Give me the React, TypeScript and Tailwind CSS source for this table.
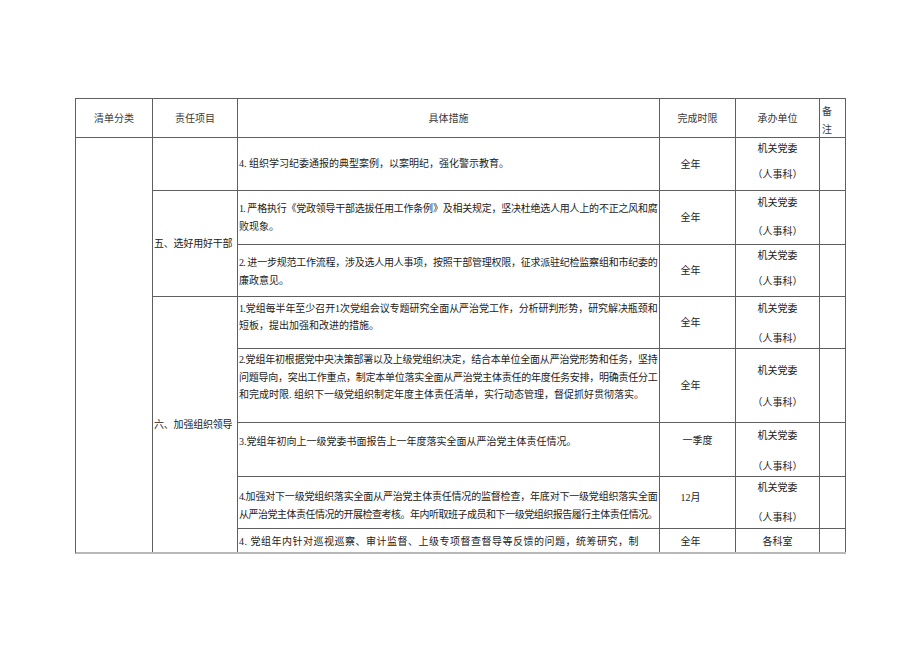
import React from 'react';

// 党风廉政建设责任清单（节选）— table reproduced with a CSS grid

type Row = {
  lines: string[];
  justifyAll?: boolean;
  measureCls: string;
  deadline: string;
  deadlineCls: string;
  unit: 'party' | 'office';
  unitCls: string;
};

const rows: Row[] = [
  {
    lines: ['4. 组织学习纪委通报的典型案例，以案明纪，强化警示教育。'],
    measureCls: 'row-start-2',
    deadline: '全年',
    deadlineCls: 'row-start-2 pr-[14px]',
    unit: 'party',
    unitCls: 'row-start-2 pt-[4px] pb-[8px]',
  },
  {
    lines: [
      '1. 严格执行《党政领导干部选拔任用工作条例》及相关规定，坚决杜绝选人用人上的不正之风和腐',
      '败现象。',
    ],
    measureCls: 'row-start-3',
    deadline: '全年',
    deadlineCls: 'row-start-3 pr-[14px]',
    unit: 'party',
    unitCls: 'row-start-3 pt-[5px] pb-[5px]',
  },
  {
    lines: [
      '2. 进一步规范工作流程，涉及选人用人事项，按照干部管理权限，征求派驻纪检监察组和市纪委的',
      '廉政意见。',
    ],
    measureCls: 'row-start-4 pt-[2px]',
    deadline: '全年',
    deadlineCls: 'row-start-4 pr-[14px]',
    unit: 'party',
    unitCls: 'row-start-4 pt-[4px] pb-[7px]',
  },
  {
    lines: [
      '1.党组每半年至少召开1次党组会议专题研究全面从严治党工作，分析研判形势，研究解决瓶颈和',
      '短板，提出加强和改进的措施。',
    ],
    measureCls: 'row-start-5 pb-[11px]',
    deadline: '全年',
    deadlineCls: 'row-start-5 pr-[14px]',
    unit: 'party',
    unitCls: 'row-start-5 pt-[5px] pb-[2px]',
  },
  {
    lines: [
      '2.党组年初根据党中央决策部署以及上级党组织决定，结合本单位全面从严治党形势和任务，坚持',
      '问题导向，突出工作重点，制定本单位落实全面从严治党主体责任的年度任务安排，明确责任分工',
      '和完成时限. 组织下一级党组织制定年度主体责任清单，实行动态管理，督促抓好贯彻落实。',
    ],
    measureCls: 'row-start-6 pb-[16px]',
    deadline: '全年',
    deadlineCls: 'row-start-6 pr-[14px]',
    unit: 'party',
    unitCls: 'row-start-6 pt-[15px] pb-[12px]',
  },
  {
    lines: ['3.党组年初向上一级党委书面报告上一年度落实全面从严治党主体责任情况。'],
    measureCls: 'row-start-7 pb-[16px]',
    deadline: '一季度',
    deadlineCls: 'row-start-7 pb-[18px]',
    unit: 'party',
    unitCls: 'row-start-7 pt-[6px] pb-[2px]',
  },
  {
    lines: [
      '4.加强对下一级党组织落实全面从严治党主体责任情况的监督检查，年底对下一级党组织落实全面',
      '从严治党主体责任情况的开展检查考核。年内听取班子成员和下一级党组织报告履行主体责任情况。',
    ],
    justifyAll: true,
    measureCls: 'row-start-8 pt-[6px]',
    deadline: '12月',
    deadlineCls: 'row-start-8 pr-[14px] pb-[10px]',
    unit: 'party',
    unitCls: 'row-start-8 pt-[4px] pb-[3px]',
  },
  {
    lines: ['4. 党组年内针对巡视巡察、审计监督、上级专项督查督导等反馈的问题，统筹研究，制'],
    measureCls: 'row-start-9 pt-[2px] tracking-[0.5px]',
    deadline: '全年',
    deadlineCls: 'row-start-9 pr-[14px] pt-[2px]',
    unit: 'office',
    unitCls: 'row-start-9 pt-[2px]',
  },
];

const cell = 'border-r border-b border-[#5f5f5f]';
const lastCell = 'border-r border-[#5f5f5f]';

function MeasureCell({ row, last }: { row: Row; last: boolean }) {
  return (
    <div className={`${last ? lastCell : cell} col-start-3 flex flex-col justify-center pl-px pr-[2px] leading-[17.5px] ${row.measureCls}`}>
      {row.lines.map((text, i) => {
        const justify = row.justifyAll || i < row.lines.length - 1;
        return (
          <div
            key={i}
            className={justify ? 'text-justify [text-align-last:justify] tracking-[-0.7px]' : ''}
          >
            {text}
          </div>
        );
      })}
    </div>
  );
}

function UnitCell({ row, last }: { row: Row; last: boolean }) {
  if (row.unit === 'office') {
    return (
      <div className={`${last ? lastCell : cell} col-start-5 flex items-center justify-center ${row.unitCls}`}>
        各科室
      </div>
    );
  }
  return (
    <div className={`${last ? lastCell : cell} col-start-5 flex flex-col items-center justify-between leading-[14px] ${row.unitCls}`}>
      <span>机关党委</span>
      <span>（人事科）</span>
    </div>
  );
}

export default function App() {
  return (
    <div className="min-h-screen bg-white pt-[98px] pl-[75px] font-['Liberation_Serif','Noto_Sans_CJK_SC',serif] text-[10px] text-[#222]">
      <div className="grid w-fit grid-cols-[77px_85px_422px_76px_84px_26px] grid-rows-[39px_53px_54px_52px_52px_74px_54px_52px_23px] border-t border-l border-b-2 border-[#5f5f5f] border-b-[#b8b8b8]">
        {/* header */}
        <div className={`${cell} col-start-1 row-start-1 flex items-center justify-center text-[#3a3a3a]`}>清单分类</div>
        <div className={`${cell} col-start-2 row-start-1 flex items-center justify-center text-[#3a3a3a]`}>责任项目</div>
        <div className={`${cell} col-start-3 row-start-1 flex items-center justify-center text-[#3a3a3a]`}>具体措施</div>
        <div className={`${cell} col-start-4 row-start-1 flex items-center justify-center text-[#3a3a3a]`}>完成时限</div>
        <div className={`${cell} col-start-5 row-start-1 flex items-center justify-center text-[#3a3a3a]`}>承办单位</div>
        <div className={`${cell} col-start-6 row-start-1 flex flex-col pl-[2px] pt-[4px] leading-[18px] text-[#3a3a3a]`}>
          <span>备</span>
          <span>注</span>
        </div>

        {/* 清单分类 (merged, empty) */}
        <div className={`${lastCell} col-start-1 row-start-2 row-span-8`} />

        {/* 责任项目 */}
        <div className={`${cell} col-start-2 row-start-2`} />
        <div className={`${cell} col-start-2 row-start-3 row-span-2 flex items-center pl-px tracking-[-0.2px]`}>五、选好用好干部</div>
        <div className={`${lastCell} col-start-2 row-start-5 row-span-5 flex items-center pl-px tracking-[-0.2px]`}>六、加强组织领导</div>

        {rows.map((row, i) => {
          const last = i === rows.length - 1;
          return (
            <React.Fragment key={i}>
              <MeasureCell row={row} last={last} />
              <div className={`${last ? lastCell : cell} col-start-4 flex items-center justify-center ${row.deadlineCls}`}>
                {row.deadline}
              </div>
              <UnitCell row={row} last={last} />
              <div className={`${last ? lastCell : cell} col-start-6 ${row.measureCls.split(' ')[0]}`} />
            </React.Fragment>
          );
        })}
      </div>
    </div>
  );
}
